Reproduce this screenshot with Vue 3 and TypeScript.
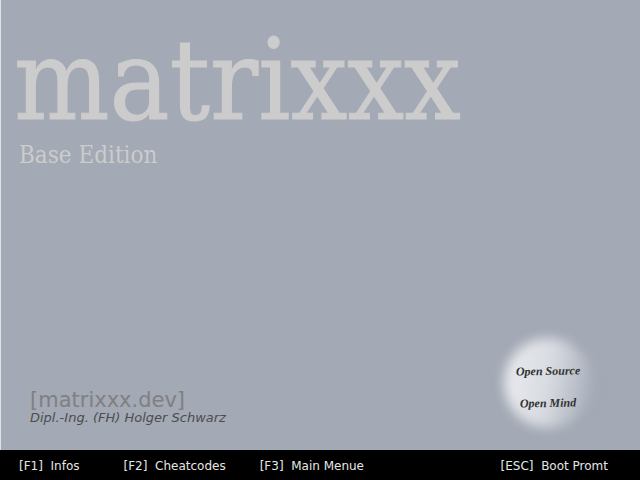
<script setup lang="ts">
interface BootKey {
  key: string
  label: string
}

const keys: BootKey[] = [
  { key: 'F1', label: 'Infos' },
  { key: 'F2', label: 'Cheatcodes' },
  { key: 'F3', label: 'Main Menue' },
  { key: 'ESC', label: 'Boot Promt' },
]
</script>

<template>
  <div class="splash">
    <main class="stage">
      <header>
        <h1 class="title">matrixxx</h1>
        <p class="edition">Base Edition</p>
      </header>
      <div class="bottom">
        <div class="author">
          <p class="site">[matrixxx.dev]</p>
          <p class="name">Dipl.-Ing. (FH) Holger Schwarz</p>
        </div>
        <div class="badge">
          <p>Open Source</p>
          <p>Open Mind</p>
        </div>
      </div>
    </main>
    <nav class="keys">
      <button v-for="item in keys" :key="item.key" type="button" class="key">[{{ item.key }}]&nbsp; {{ item.label }}</button>
    </nav>
  </div>
</template>

<style>
body {
  margin: 0;
  background: #a3a9b5;
}
</style>

<style scoped>
.splash {
  display: flex;
  flex-direction: column;
  min-height: 100vh;
  font-family: "DejaVu Sans", sans-serif;
}

h1,
p {
  margin: 0;
}

.stage {
  flex: 1;
  display: flex;
  flex-direction: column;
  justify-content: space-between;
  padding: 18px 40px 8px 13px;
  border-left: 1px solid #e0e2e6;
  background: #a3a9b5;
}

.title {
  font: 400 112px/124px "DejaVu Serif Condensed", "Liberation Serif", serif;
  color: #cccccc;
  -webkit-text-stroke: 1px #cccccc;
}

.edition {
  padding-left: 5px;
  font: 24px/26px "DejaVu Serif Condensed", "Liberation Serif", serif;
  color: #cccccc;
}

header {
  white-space: nowrap;
}

.bottom {
  display: flex;
  justify-content: space-between;
  align-items: flex-end;
}

.author {
  padding: 0 0 16px 16px;
}

.site {
  font-size: 21px;
  line-height: 20px;
  color: #808080;
}

.name {
  font-size: 13px;
  line-height: 16px;
  font-style: italic;
  color: #4d4d4d;
}

.badge {
  position: relative;
  display: flex;
  flex-direction: column;
  justify-content: center;
  gap: 16px;
  box-sizing: border-box;
  width: 104px;
  height: 116px;
  padding-top: 6px;
  font: italic 700 12px/16px "Liberation Serif", serif;
  text-align: center;
  color: #333333;
}

.badge::before {
  content: "";
  position: absolute;
  inset: 12px 8px 14px 8px;
  border-radius: 50%;
  background: linear-gradient(100deg, #e8eaee 10%, #d8dbe1 50%, #a8aeba 94%);
  filter: blur(6px);
}

.badge p {
  position: relative;
  transform: rotate(-1deg);
}

.keys {
  display: flex;
  gap: 34px;
  padding: 2px 32px 0 19px;
  background: #000000;
}

.key {
  padding: 0;
  border: 0;
  background: none;
  font: 12px/28px "DejaVu Sans", sans-serif;
  color: #e6e6e6;
  white-space: nowrap;
  cursor: pointer;
}

.key:first-child {
  margin-right: 10px;
}

.key:last-child {
  margin-left: auto;
}
</style>
